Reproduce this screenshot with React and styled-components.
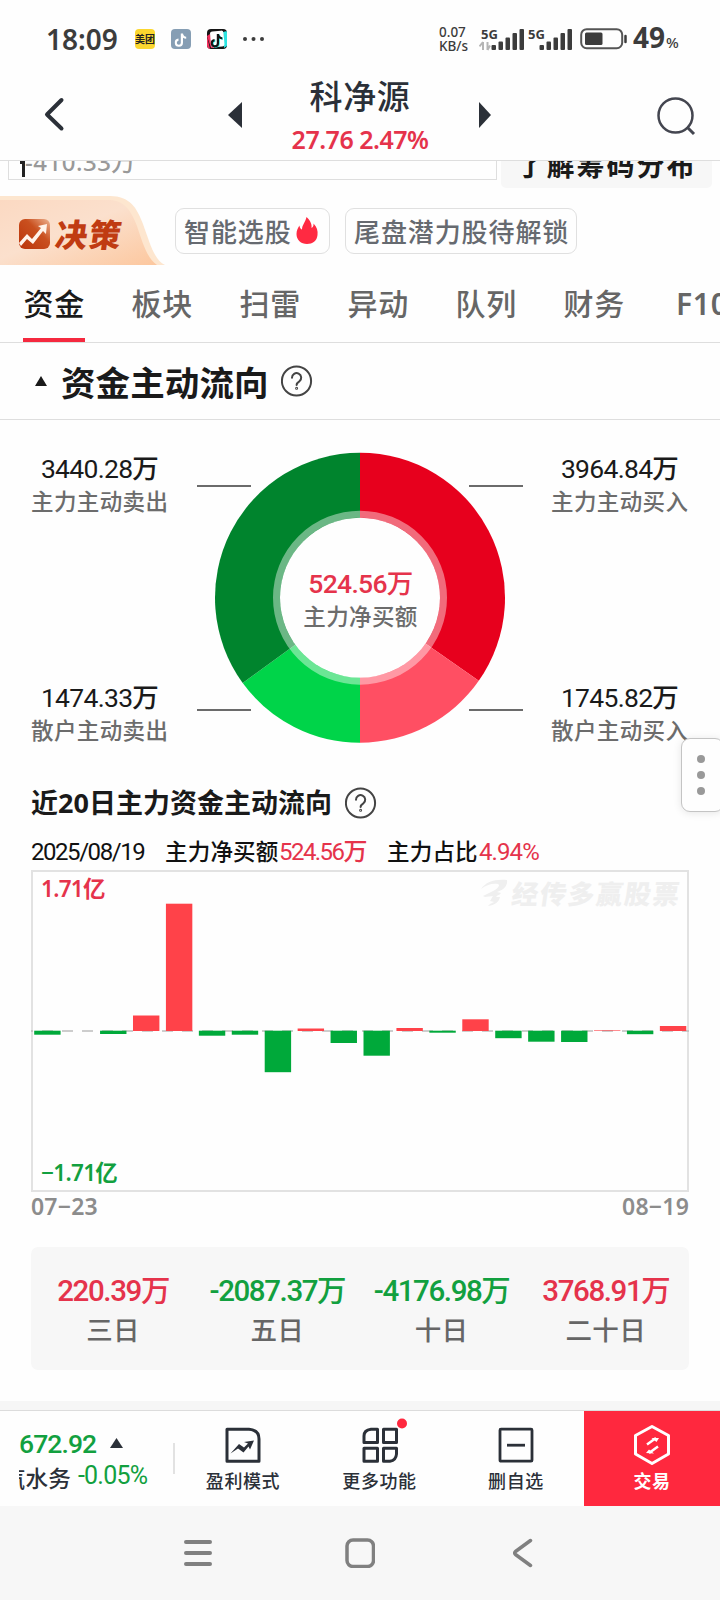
import React from 'react';
import styled, { createGlobalStyle } from 'styled-components';

const CJK = `'Noto Sans CJK SC', sans-serif`;
const NUM = `Roboto, 'Noto Sans CJK SC', sans-serif`;
const UI = `'Noto Sans', 'Noto Sans CJK SC', sans-serif`;

const RED = '#e5334b';
const GREEN = '#12a03f';

const GlobalStyle = createGlobalStyle`
    * {
        box-sizing: border-box;
    }

    body {
        margin: 0;
        background: #fefefe;
        font-family: ${CJK};
        color: #1a1a1a;
    }

    svg {
        display: block;
        flex: none;
    }
`;

const Screen = styled.div`
    width: 720px;
    height: 1600px;
    display: flex;
    flex-direction: column;
    overflow: hidden;
    position: relative;
    white-space: nowrap;
`;

/* ---- status bar ---- */

const StatusBar = styled.div`
    height: 78px;
    flex: none;
    display: flex;
    align-items: center;
    padding: 0 40px 0 46px;
    font-family: ${UI};
    color: #3c3c3c;
`;

const Clock = styled.div`
    width: 89px;
    font-size: 28px;
    font-weight: 600;
    letter-spacing: 0;
    line-height: 28px;
`;

const AppBadge = styled.div`
    width: 20px;
    height: 20px;
    margin-right: 16px;
    border-radius: 4px;
    overflow: hidden;
    background: ${(p) => p.$bg};
    font-family: ${CJK};
    font-size: 10px;
    font-weight: 700;
    line-height: 19px;
    text-align: center;
    color: #222;
`;

const StatusRight = styled.div`
    margin-left: auto;
    display: flex;
    align-items: center;
`;

const Speed = styled.div`
    width: 40px;
    font-size: 13.5px;
    font-weight: 500;
    line-height: 14px;
`;

const Signal = styled.svg`
    margin-right: ${(p) => p.$gap}px;
    font-family: ${UI};
`;

const Battery = styled.div`
    font-size: 28px;
    font-weight: 700;
    line-height: 28px;
    margin-left: 5px;
    width: 47px;

    small {
        font-size: 15px;
        font-weight: 500;
        margin-left: 1px;
    }
`;

/* ---- header ---- */

const Header = styled.div`
    height: 83px;
    flex: none;
    display: grid;
    grid-template-columns: 228px 264px 228px;
    border-bottom: 1px solid #dedede;
`;

const HeaderSide = styled.div`
    display: flex;
    align-items: flex-start;
    justify-content: ${(p) => (p.$end ? 'flex-end' : 'flex-start')};
    padding: ${(p) => (p.$end ? '19px 23px 0 0' : '18px 0 0 43px')};
`;

const Switcher = styled.div`
    display: flex;
    align-items: flex-start;
    justify-content: space-between;

    > svg {
        margin-top: 24px;
    }
`;

const StockName = styled.div`
    text-align: center;
    font-size: 33px;
    font-weight: 500;
    letter-spacing: 0.7px;
    line-height: 34px;
    color: #2b3038;
`;

const StockPrice = styled.div`
    margin-top: 10px;
    text-align: center;
    font-family: ${UI};
    font-size: 25px;
    font-weight: 600;
    letter-spacing: -0.5px;
    line-height: 34px;
    color: ${RED};
`;

/* ---- remains of the scrolled chip chart ---- */

const Peek = styled.div`
    height: 35px;
    flex: none;
    display: flex;
    align-items: flex-start;
    overflow: hidden;
    padding-left: 8px;
`;

const PeekBox = styled.div`
    width: 489px;
    height: 19px;
    display: flex;
    align-items: flex-start;
    border: 1px solid #dedede;
    border-top: none;
    padding-left: 11px;
    font-family: ${UI};
    font-size: 24px;
    font-weight: 500;
    color: #999;

    span {
        margin-top: -15px;
        line-height: 32px;
        letter-spacing: 0.5px;
    }
`;

const PeekButton = styled.div`
    width: 211px;
    height: 27px;
    margin-left: 4px;
    border-radius: 0 0 5px 5px;
    background: #f7f7f7;
    text-align: center;
    font-size: 28px;
    font-weight: 700;
    letter-spacing: 2px;

    span {
        display: block;
        margin-top: -13px;
        line-height: 32px;
    }
`;

/* ---- promo chips ---- */

const Promo = styled.div`
    height: 69px;
    flex: none;
    display: flex;
    align-items: flex-start;
`;

const Decision = styled.div`
    width: 175px;
    height: 69px;
    position: relative;

    > svg {
        position: absolute;
        left: 0;
        top: 0;
    }
`;

const DecisionText = styled.div`
    position: absolute;
    left: 56px;
    top: 20px;
    font-size: 32px;
    font-weight: 900;
    line-height: 34px;
    letter-spacing: 1.5px;
    transform: skewX(-8deg);
    color: #c03b12;
`;

const Chip = styled.div`
    width: ${(p) => p.$w}px;
    height: 46px;
    margin: 12px 15px 0 0;
    padding-left: 8px;
    display: flex;
    align-items: center;
    border: 1px solid #e0e0e0;
    border-radius: 9px;
    font-size: 26px;
    font-weight: 500;
    letter-spacing: 0.9px;
    line-height: 40px;
    color: #666a70;

    svg {
        margin-left: 4px;
    }
`;

/* ---- tabs ---- */

const Tabs = styled.div`
    height: 78px;
    flex: none;
    display: flex;
    gap: 46px;
    padding-left: 23px;
    border-bottom: 1px solid #dedede;
    overflow: hidden;
`;

const Tab = styled.div`
    width: 62px;
    flex: none;
    height: 77px;
    padding-left: ${(p) => (p.$latin ? 5 : 0.5)}px;
    border-bottom: 4px solid ${(p) => (p.$active ? '#f5293f' : 'transparent')};
    font-family: ${(p) => (p.$latin ? UI : CJK)};
    font-size: 30px;
    font-weight: ${(p) => (p.$latin ? 600 : 500)};
    letter-spacing: 0.7px;
    line-height: ${(p) => (p.$latin ? 77 : 74)}px;
    color: ${(p) => (p.$active ? '#1a1a1a' : '#666')};
`;

/* ---- section heading ---- */

const SectionHead = styled.div`
    height: 77px;
    flex: none;
    display: flex;
    align-items: center;
    padding-left: 35px;
    border-bottom: 1px solid #dedede;
`;

const SectionTitle = styled.div`
    width: 208px;
    margin: 0 12px 0 14px;
    font-size: 34.5px;
    font-weight: 700;
    letter-spacing: 0.1px;
    line-height: 72px;
`;

/* ---- donut ---- */

const FlowPanel = styled.div`
    height: 338px;
    flex: none;
    display: grid;
    grid-template-columns: 136px 384px 136px;
    padding: 32px 0 0 32px;
`;

const FlowSide = styled.div`
    display: flex;
    flex-direction: column;
    gap: 165px;
    margin-left: -1px;
`;

const Stat = styled.div`
    height: 64px;
    text-align: center;
`;

const StatValue = styled.div`
    font-family: ${NUM};
    font-size: 26.5px;
    font-weight: ${(p) => (p.$color ? 500 : 450)};
    letter-spacing: -0.7px;
    line-height: 33px;
    color: ${(p) => p.$color || '#1a1a1a'};
`;

const StatLabel = styled.div`
    font-size: 22.5px;
    font-weight: 500;
    letter-spacing: 0.4px;
    line-height: 33px;
    margin-top: -1px;
    color: #6c6c6c;
`;

const DonutWrap = styled.div`
    position: relative;
    height: 292px;
`;

const DonutCenter = styled.div`
    position: absolute;
    left: 112px;
    top: 115px;
    width: 161px;
    text-align: center;
`;

/* ---- 20 day chart ---- */

const HistoryHead = styled.div`
    height: 90px;
    flex: none;
    display: flex;
    align-items: center;
    padding: 0 0 0 31px;
`;

const HistoryTitle = styled.div`
    margin-right: 13px;
    width: 301px;
    font-family: ${UI};
    font-size: 27px;
    font-weight: 700;
    line-height: 40px;
`;

const InfoLine = styled.div`
    height: 34px;
    flex: none;
    margin-top: -13px;
    padding-left: 31px;
    display: flex;
    font-family: ${NUM};
    font-weight: 450;
    line-height: 34px;
    color: #111;
`;

const InfoText = styled.div`
    width: ${(p) => p.$w}px;
    flex: none;
    font-size: 22.5px;
    font-weight: 500;
    letter-spacing: 0.2px;
`;

const InfoNumber = styled.div`
    width: ${(p) => p.$w}px;
    flex: none;
    font-size: 24px;
    letter-spacing: ${(p) => p.$spacing}px;
    color: ${(p) => (p.$up ? RED : 'inherit')};
`;

const ChartBox = styled.div`
    width: 658px;
    height: 322px;
    flex: none;
    margin: 1px 0 0 31px;
    position: relative;
    border: 2px solid #e2e2e2;

    > svg {
        margin: -2px;
    }
`;

const AxisMark = styled.div`
    position: absolute;
    left: 8px;
    ${(p) => (p.$bottom ? 'bottom: 2px;' : 'top: 2px;')}
    font-family: ${UI};
    font-size: 22.5px;
    font-weight: 600;
    letter-spacing: -0.7px;
    line-height: 30px;
    color: ${(p) => (p.$bottom ? GREEN : RED)};
`;

const Watermark = styled.div`
    position: absolute;
    right: 6px;
    top: 6px;
    display: flex;
    align-items: center;
    font-size: 26.5px;
    font-weight: 900;
    letter-spacing: 1.7px;
    line-height: 30px;
    color: #efefef;

    span {
        margin-left: 4px;
        transform: skewX(-8deg);
    }
`;

const Dates = styled.div`
    width: 658px;
    height: 31px;
    flex: none;
    margin-left: 31px;
    display: flex;
    justify-content: space-between;
    font-family: ${UI};
    font-size: 23px;
    font-weight: 600;
    letter-spacing: 0.2px;
    line-height: 29px;
    color: #8c8c8c;
`;

const Summary = styled.div`
    width: 658px;
    height: 123px;
    flex: none;
    margin: 24px 0 0 31px;
    padding: 23px 1px 0 0;
    display: grid;
    grid-template-columns: repeat(4, 1fr);
    border-radius: 7px;
    background: #f7f7f7;
    text-align: center;
`;

const SummaryValue = styled.div`
    font-family: ${NUM};
    font-size: 29.5px;
    font-weight: 500;
    letter-spacing: -1.4px;
    line-height: 42px;
    color: ${(p) => (p.$down ? GREEN : RED)};
`;

const SummaryLabel = styled.div`
    margin-top: -1px;
    font-size: 26.5px;
    font-weight: 500;
    letter-spacing: 0.5px;
    line-height: 36px;
    color: #666;
`;

/* ---- bottom bars ---- */

const BottomBar = styled.div`
    height: 105px;
    flex: none;
    margin-top: 31px;
    display: grid;
    grid-template-columns: 175px 136px 137px 136px 136px;
    border-top: 9px solid #f6f6f6;
    box-shadow: inset 0 1px 0 #dcdcdc;
`;

const Ticker = styled.div`
    margin: 1px 0 0 0;
    padding: 16px 0 0 19px;
    position: relative;
    font-family: ${NUM};

    &::after {
        content: '';
        position: absolute;
        right: 0;
        top: 32px;
        width: 2px;
        height: 31px;
        background: #e2e2e2;
    }
`;

const TickerLine = styled.div`
    display: flex;
    align-items: center;
    height: 32px;
    color: ${GREEN};
    font-size: 26.5px;
    font-weight: 500;
    letter-spacing: -0.9px;

    svg {
        margin-left: 14px;
    }
`;

const TickerName = styled.div`
    width: 52px;
    margin-top: 7px;
    display: flex;
    justify-content: flex-end;
    overflow: hidden;
    font-size: 22.5px;
    font-weight: 500;
    letter-spacing: 0.3px;
    line-height: 34px;
    color: #2b3038;
`;

const TickerPercent = styled.div`
    margin-left: 7px;
    font-size: 25px;
    font-weight: 450;
    letter-spacing: -0.8px;
`;

const BarItem = styled.div`
    margin-top: 1px;
    padding-top: 14px;
    display: flex;
    flex-direction: column;
    align-items: center;
    background: ${(p) => (p.$primary ? '#ff283e' : 'transparent')};
    font-size: 18px;
    font-weight: ${(p) => (p.$primary ? 700 : 500)};
    letter-spacing: 0.6px;
    line-height: 26px;
    color: ${(p) => (p.$primary ? '#fff' : '#2b3038')};

    svg {
        margin-bottom: 2px;
        overflow: visible;
    }
`;

const SystemNav = styled.div`
    height: 94px;
    flex: none;
    display: grid;
    grid-template-columns: 162px 168px 22px;
    align-items: center;
    padding: 0 0 0 183px;
    background: #f7f7f7;
`;

const SideHandle = styled.div`
    position: absolute;
    right: -4px;
    top: 738px;
    width: 43px;
    height: 74px;
    padding: 16px 0 0 15px;
    display: flex;
    flex-direction: column;
    gap: 8px;
    border: 1px solid #c4c4c4;
    border-radius: 9px;
    background: #fefefe;
    box-shadow: 0 1px 8px rgba(0, 0, 0, 0.1);

    i {
        width: 8px;
        height: 8px;
        border-radius: 50%;
        background: #999;
    }
`;

const tabs = ['资金', '板块', '扫雷', '异动', '队列', '财务', 'F10'];

const summary = [
    { value: '220.39万', label: '三日' },
    { value: '-2087.37万', label: '五日' },
    { value: '-4176.98万', label: '十日' },
    { value: '3768.91万', label: '二十日' },
];

// bar heights in px, above (+) or below (-) the zero line
const bars = [-4, 0, -3.3, 15.5, 127.3, -5, -4, -41.5, 2.5, -12.3, -25, 3, -2, 11.7, -7.5, -11, -11.3, 0.6, -3.5, 5];

function arc(from, to, color) {
    const point = (deg) => {
        const a = (deg * Math.PI) / 180;
        return `${192 + 145 * Math.sin(a)} ${145.7 - 145 * Math.cos(a)}`;
    };
    return <path key={from} fill={color} d={`M192 145.7L${point(from)}A145 145 0 0 1 ${point(to)}Z`} />;
}

function Donut() {
    return (
        <svg width="384" height="292">
            {arc(0, 125, '#e7001d')}
            {arc(125, 180, '#ff4f63')}
            {arc(180, 234, '#00d449')}
            {arc(234, 360, '#00842d')}
            <circle cx="192" cy="145.7" r="83.5" fill="none" stroke="#fff" strokeOpacity="0.42" strokeWidth="7" />
            <circle cx="192" cy="145.7" r="80" fill="#fefefe" />
            <path d="M29 34h54M301 34h54M29 258h54M301 258h54" stroke="#6b6b6b" strokeWidth="2" />
        </svg>
    );
}

function FlowChart() {
    return (
        <svg width="658" height="322">
            <path d="M0 161H658" stroke="#bdbdbd" strokeWidth="1.5" strokeDasharray="11 9" strokeDashoffset="9" />
            {bars.map((h, i) => (
                <rect
                    key={i}
                    x={3.2 + i * 32.93}
                    y={h > 0 ? 161 - h : 160.7}
                    width="26.4"
                    height={Math.abs(h)}
                    fill={h > 0 ? '#ff4249' : '#00a93a'}
                />
            ))}
        </svg>
    );
}

function Help() {
    return (
        <svg width="32" height="32" fill="none" stroke="#444" strokeWidth="2" strokeLinecap="round">
            <circle cx="15.5" cy="16" r="14.6" />
            <path d="M11 12.8a4.6 4.6 0 1 1 7.3 3.6c-1.800 1.200-2.700 1.800-2.700 3.600" />
            <circle cx="15.6" cy="23.3" r="0.5" />
        </svg>
    );
}

const NOTE = 'M9.2 3h2.2c.3 1.9 1.4 3 3.2 3.2v2.1c-1.200 0-2.300-.4-3.200-1v4.900a4.100 4.100 0 1 1-4.500-4.100v2.200a2 2 0 1 0 2.300 1.900z';

function SignalBars({ arrows, gap, w }) {
    return (
        <Signal $gap={gap} width={w} height="24" viewBox={`0 0 ${w} 24`}>
            <text x={arrows ? 2 : 0} y="11.500" fontSize="13" fontWeight="700" fill="#3c3c3c">5G</text>
            {arrows && (
                <path d="M4 15v8M4 15l-3.500 4.500M8.500 23v-8M8.500 23l2.500-4.500" stroke="#b5b5b5" strokeWidth="2" fill="none" />
            )}
            {[5, 8.5, 12.5, 17, 21].map((h, i) => (
                <rect key={h} x={w - 32.5 + i * 7} y={23 - h} width="4.500" height={h} rx="1" fill="#3c3c3c" />
            ))}
        </Signal>
    );
}

function Status() {
    return (
        <StatusBar>
            <Clock>18:09</Clock>
            <AppBadge $bg="#fbd72f">美团</AppBadge>
            <AppBadge $bg="#869eb4">
                <svg width="20" height="20"><path d={NOTE} transform="translate(.6 1.500)" fill="#fff" /></svg>
            </AppBadge>
            <AppBadge $bg="#151515">
                <svg width="20" height="20">
                    <path d="M0 7L3 20H0z" fill="#f5305e" />
                    <path d="M0 7l4 12 3 0-4-14z" fill="#f5305e" />
                    <path d="M16 3l4-1v15l-3 2z" fill="#2ce5e2" />
                    <rect x="3.500" y="2" width="13.500" height="16" rx="2.500" fill="#fff" transform="rotate(-5 10 10)" />
                    <path d={NOTE} transform="translate(1.400 2.400)" fill="#2ce5e2" />
                    <path d={NOTE} transform="translate(.6 2)" fill="#151515" />
                </svg>
            </AppBadge>
            <svg width="24" height="6" fill="#3c3c3c">
                <circle cx="2" cy="3" r="2" />
                <circle cx="10.500" cy="3" r="2" />
                <circle cx="19" cy="3" r="2" />
            </svg>
            <StatusRight>
                <Speed>
                    <div>0.07</div>
                    <div>KB/s</div>
                </Speed>
                <SignalBars arrows w={45} gap={4} />
                <SignalBars w={44} gap={8} />
                <svg width="48" height="22">
                    <rect x="1.200" y="1.200" width="41" height="19" rx="5.500" fill="none" stroke="#555" strokeWidth="2" />
                    <rect x="5" y="4.500" width="17.500" height="12.500" rx="1.500" fill="#3c3c3c" />
                    <path d="M45.500 8v6" stroke="#3c3c3c" strokeWidth="2.500" strokeLinecap="round" />
                </svg>
                <Battery>49<small>%</small></Battery>
            </StatusRight>
        </StatusBar>
    );
}

function App() {
    return (
        <Screen>
            <GlobalStyle />
            <Status />
            <Header>
                <HeaderSide>
                    <svg width="22" height="36" fill="none" stroke="#2b3038" strokeWidth="4" strokeLinecap="round" strokeLinejoin="round">
                        <path d="M18.500 4L4 18.500L18.500 32.500" />
                    </svg>
                </HeaderSide>
                <Switcher>
                    <svg width="14" height="26"><path d="M14 0v26L0 13z" fill="#2b3038" /></svg>
                    <div>
                        <StockName>科净源</StockName>
                        <StockPrice>27.76 2.47%</StockPrice>
                    </div>
                    <svg width="14" height="26"><path d="M1 0v26L13 13z" fill="#2b3038" /></svg>
                </Switcher>
                <HeaderSide $end>
                    <svg width="40" height="40" fill="none" stroke="#444650" strokeWidth="2.500">
                        <circle cx="18.500" cy="18.500" r="17" />
                        <path d="M30 30l7 7" strokeWidth="3" />
                    </svg>
                </HeaderSide>
            </Header>

            <Peek>
                <PeekBox>
                    <svg width="5" height="17"><path d="M0 0h5v16H2V3H0z" fill="#222" /></svg>
                    <span>-410.33万</span>
                </PeekBox>
                <PeekButton><span>了解筹码分布</span></PeekButton>
            </Peek>

            <Promo>
                <Decision>
                    <svg width="175" height="69">
                        <defs>
                            <linearGradient id="peach" x1="0" y1="0" x2="1" y2="1">
                                <stop offset="0" stopColor="#fbd9c2" />
                                <stop offset="0.450" stopColor="#fbe0cd" />
                                <stop offset="1" stopColor="#fcc79e" />
                            </linearGradient>
                            <linearGradient id="brick" x1="1" y1="0" x2="0" y2="1">
                                <stop offset="0" stopColor="#eeb391" />
                                <stop offset="0.400" stopColor="#c9501f" />
                                <stop offset="1" stopColor="#bb3409" />
                            </linearGradient>
                        </defs>
                        <path d="M0 0H110C130 0 137 12 143 28C150 47 154 64 165 69H0z" fill="#fde6cf" />
                        <path d="M0 4H108C124 4 131 14 137 30C143 48 147 62 157 69H0z" fill="url(#peach)" />
                        <rect x="19" y="23" width="31" height="30" rx="6" fill="url(#brick)" />
                        <path d="M19 47l8-9 5 5 9-11-3-2 9-2-1 10-3-3-10 13-6-5-6 7z" fill="#fff3ea" />
                    </svg>
                    <DecisionText>决策</DecisionText>
                </Decision>
                <Chip $w={155}>
                    智能选股
                    <svg width="22" height="28">
                        <path d="M10.500 0C15 4 16 8 15.500 11C17 10 17.800 8.500 17.500 6.500C21 10 22 14 21.500 18C21 24 16.500 27 11 27C5 27 .5 23 .5 17C.5 13.500 2 10.500 3.500 8.500C3.600 10.500 4.500 12 6 12.500C6 8 9.500 5 10.500 0z" fill="#ff2a42" />
                    </svg>
                </Chip>
                <Chip $w={232}>尾盘潜力股待解锁</Chip>
            </Promo>

            <Tabs>
                {tabs.map((name, i) => (
                    <Tab key={name} $active={i === 0} $latin={name === 'F10'}>{name}</Tab>
                ))}
            </Tabs>

            <SectionHead>
                <svg width="12" height="10"><path d="M6 0l6 10H0z" fill="#1a1a1a" /></svg>
                <SectionTitle>资金主动流向</SectionTitle>
                <Help />
            </SectionHead>

            <FlowPanel>
                <FlowSide>
                    <Stat>
                        <StatValue>3440.28万</StatValue>
                        <StatLabel>主力主动卖出</StatLabel>
                    </Stat>
                    <Stat>
                        <StatValue>1474.33万</StatValue>
                        <StatLabel>散户主动卖出</StatLabel>
                    </Stat>
                </FlowSide>
                <DonutWrap>
                    <Donut />
                    <DonutCenter>
                        <StatValue $color={RED}>524.56万</StatValue>
                        <StatLabel>主力净买额</StatLabel>
                    </DonutCenter>
                </DonutWrap>
                <FlowSide>
                    <Stat>
                        <StatValue>3964.84万</StatValue>
                        <StatLabel>主力主动买入</StatLabel>
                    </Stat>
                    <Stat>
                        <StatValue>1745.82万</StatValue>
                        <StatLabel>散户主动买入</StatLabel>
                    </Stat>
                </FlowSide>
            </FlowPanel>

            <HistoryHead>
                <HistoryTitle>近20日主力资金主动流向</HistoryTitle>
                <Help />
            </HistoryHead>
            <InfoLine>
                <InfoNumber $w={134} $spacing={-1.45}>2025/08/19</InfoNumber>
                <InfoText $w={114}>主力净买额</InfoText>
                <InfoNumber $w={108} $spacing={-1.55} $up>524.56万</InfoNumber>
                <InfoText $w={92}>主力占比</InfoText>
                <InfoNumber $w={70} $spacing={-0.9} $up>4.94%</InfoNumber>
            </InfoLine>
            <ChartBox>
                <FlowChart />
                <AxisMark>1.71亿</AxisMark>
                <AxisMark $bottom>−1.71亿</AxisMark>
                <Watermark>
                    <svg width="28" height="28" fill="#efefef">
                        <path d="M1 10C6 3 14 0 27 1C28 6 24 11 17 13L21 14C20 16 17 16 16 18L20 18C19 23 15 26 8 27L10 25L14 23L10 22L13 17L5 18L3 17L15 11C19 8 20 6 18 5C12 4 6 6 1 10z" />
                    </svg>
                    <span>经传多赢股票</span>
                </Watermark>
            </ChartBox>
            <Dates>
                <span>07−23</span>
                <span>08−19</span>
            </Dates>
            <Summary>
                {summary.map((s) => (
                    <div key={s.label}>
                        <SummaryValue $down={s.value[0] === '-'}>{s.value}</SummaryValue>
                        <SummaryLabel>{s.label}</SummaryLabel>
                    </div>
                ))}
            </Summary>

            <BottomBar>
                <Ticker>
                    <TickerLine>
                        672.92
                        <svg width="13" height="10"><path d="M6.500 0L13 10H0z" fill="#2b3038" /></svg>
                    </TickerLine>
                    <TickerLine>
                        <TickerName>汽水务</TickerName>
                        <TickerPercent>-0.05%</TickerPercent>
                    </TickerLine>
                </Ticker>
                <BarItem>
                    <svg width="36" height="40" fill="none" stroke="#2b3038" strokeWidth="3">
                        <path d="M2 4.200H24Q34 5 34 14V36.200H2z" strokeLinejoin="round" />
                        <path d="M5.500 28.500L14 19l5 3.500 4-4-4-1.500 10-1.500-4 9-1.500-3-5 6-5.500-4z" fill="#2b3038" stroke="none" />
                    </svg>
                    盈利模式
                </BarItem>
                <BarItem>
                    <svg width="36" height="40" fill="none" stroke="#2b3038" strokeWidth="3" strokeLinejoin="round">
                        <path d="M9 4.200H15.500V17.500H2V11Q2 5 9 4.200z" />
                        <rect x="21.500" y="4.200" width="13" height="13.300" />
                        <rect x="2" y="23.200" width="13.500" height="13" />
                        <path d="M21.500 23.200H34.500V29Q34 35.500 28 36.200H21.500z" />
                        <circle cx="40" cy="-1.500" r="5" fill="#ff283e" stroke="none" />
                    </svg>
                    更多功能
                </BarItem>
                <BarItem>
                    <svg width="36" height="40" fill="none" stroke="#2b3038" strokeWidth="2.800">
                        <rect x="2" y="4.200" width="32" height="32" rx="1" />
                        <path d="M9 20.200h18" />
                    </svg>
                    删自选
                </BarItem>
                <BarItem $primary>
                    <svg width="36" height="40" fill="none" stroke="#fff" strokeWidth="3" strokeLinejoin="round">
                        <path d="M18 1.500L34.500 10.500V29L18 38.500L1.500 29V10.500z" />
                        <path d="M13 19.500l9-6.500M24 21.500l-9 6.500" strokeWidth="2.500" />
                        <path d="M17.500 13l7.500 0-2.500 4zM20 28.500l-8-.5 3-3.500z" fill="#fff" stroke="none" />
                    </svg>
                    交易
                </BarItem>
            </BottomBar>

            <SystemNav>
                <svg width="30" height="30" stroke="#808080" strokeWidth="4" strokeLinecap="round">
                    <path d="M3 4h24M3 15h24M3 26h24" />
                </svg>
                <svg width="30" height="30" fill="none" stroke="#808080" strokeWidth="3.500">
                    <rect x="2" y="2" width="26.500" height="26.500" rx="6" />
                </svg>
                <svg width="22" height="30" fill="none" stroke="#808080" strokeWidth="3.500" strokeLinecap="round" strokeLinejoin="round">
                    <path d="M17.500 2.500L2.500 13.500Q1 15 2.500 16.500L17.500 27.500" />
                </svg>
            </SystemNav>

            <SideHandle><i /><i /><i /></SideHandle>
        </Screen>
    );
}

export default App;
